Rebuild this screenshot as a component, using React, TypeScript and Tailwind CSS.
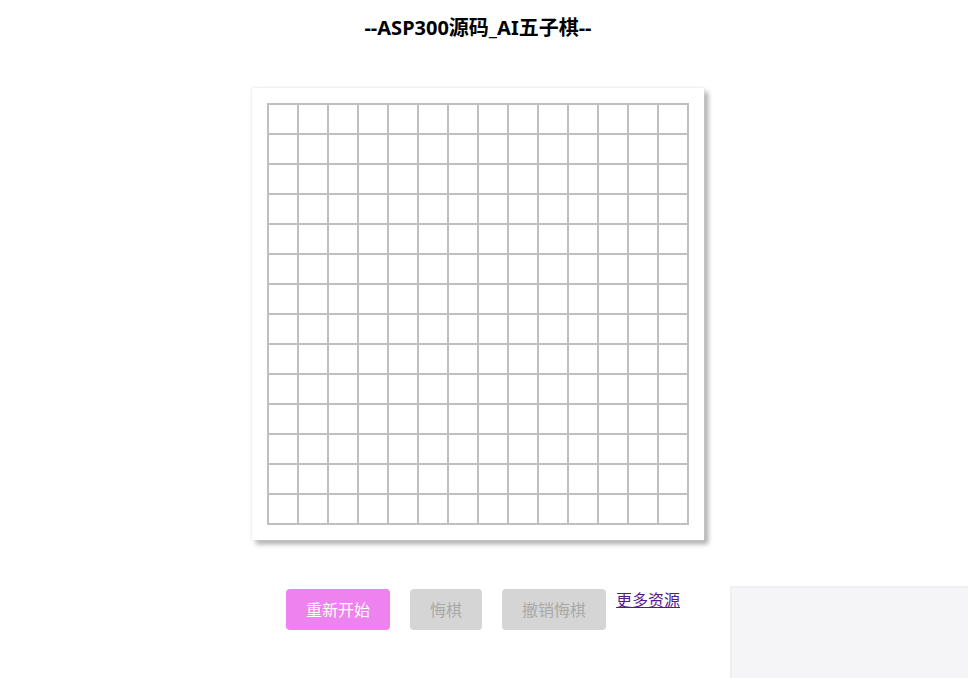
import React from 'react';

const cells = Array.from({ length: 14 * 14 });

export default function App() {
  return (
    <div className="min-h-screen bg-white font-['Noto_Sans','Noto_Sans_CJK_SC',sans-serif]">
      <div className="flex flex-col items-center pr-3">
        <h1 className="mt-[14px] text-[20px] font-bold leading-[28px] text-black">--ASP300源码_AI五子棋--</h1>

        <div className="mt-[46px] bg-white p-[15px] shadow-[0_0_3px_#e0e0e0,4px_4px_5px_#a8a8a8]">
          <div className="grid h-[422px] w-[422px] grid-cols-14 gap-[2px] bg-[#bfbfbf] p-[2px]">
            {cells.map((_, i) => (
              <div key={i} className="bg-white" />
            ))}
          </div>
        </div>
      </div>

      <div className="mt-[49px] flex items-start justify-center pr-[2px]">
        <button className="h-[41px] w-[104px] rounded-[4px] bg-[#ee82ee] text-[16px] text-white">重新开始</button>
        <button className="ml-5 h-[41px] w-[72px] rounded-[4px] bg-[#d5d5d5] text-[16px] text-[#a9a9a9]">悔棋</button>
        <button className="ml-5 h-[41px] w-[104px] rounded-[4px] bg-[#d5d5d5] text-[16px] text-[#a9a9a9]">撤销悔棋</button>
        <a href="#" className="ml-[10px] text-[16px] leading-[22px] text-[#551a8b] underline">更多资源</a>
      </div>

      <div className="fixed bottom-0 right-0 h-[92px] w-[238px] border-l-2 border-t-2 border-[#efeff1] bg-[#f5f5f7]" />
    </div>
  );
}
